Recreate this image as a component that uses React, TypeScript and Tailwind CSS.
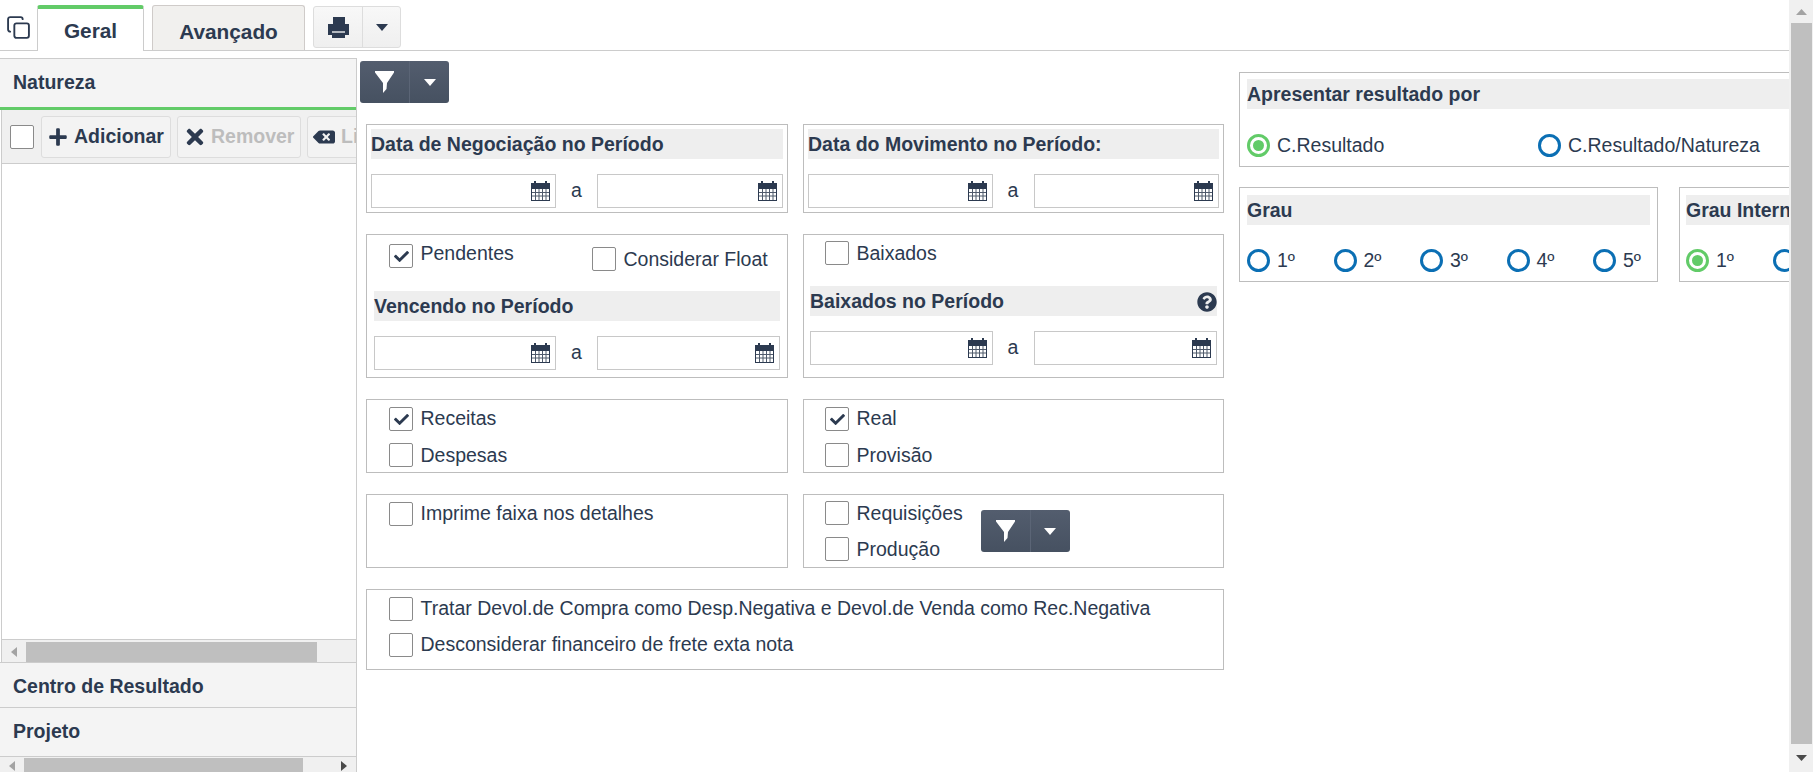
import type { ReactNode } from "react";
import { Copy } from "lucide-react";
import { FaBackspace, FaCheck, FaPlus, FaQuestionCircle, FaTimes } from "react-icons/fa";

const Caret = ({ className }: { className: string }) => (
  <svg width="12" height="7" viewBox="0 0 12 7" className={className}>
    <path d="M0 0h12L6 7z" fill="currentColor" />
  </svg>
);

const PrintIcon = () => (
  <svg width="21" height="21" viewBox="0 0 21 21">
    <path d="M5 0h12v7h4v11h-4v3H4v-3H0V7h5z" fill="#2c3a50" />
    <rect x="4" y="14" width="13" height="2" fill="#b4b9c0" />
    <rect x="1" y="18" width="3" height="3" fill="#f4f4f4" />
  </svg>
);

const FunnelButton = ({ className = "" }: { className?: string }) => (
  <div className={`flex h-[42px] w-[89px] rounded-[3px] bg-gradient-to-b from-[#535d6e] to-[#465161] text-white ${className}`}>
    <div className="flex w-[50px] items-center justify-center border-r border-[#5b6576]">
      <svg width="19" height="22" viewBox="0 0 19 22">
        <path d="M0 0h19v1.5L12 12l-.5 6L8 22V12L0 1.5z" fill="#fff" />
      </svg>
    </div>
    <div className="flex flex-1 items-center justify-center">
      <Caret className="" />
    </div>
  </div>
);

const CalendarIcon = () => (
  <svg width="19" height="20" viewBox="0 0 19 20" className="shrink-0">
    <path d="M0 2h3V0h2v2h9V0h2v2h3v18H0z" fill="#2c3a50" />
    <rect x="1" y="8" width="17" height="11" fill="#ffffff" />
    <path d="M4.5 8v11M8 8v11M11.5 8v11M15 8v11M1 11.5h17M1 15h17" stroke="#4f5a6b" strokeWidth="1" />
  </svg>
);

const DateInput = () => (
  <div className="flex h-[34px] items-center justify-end border border-[#c8c8c8] bg-white pr-[5px]">
    <CalendarIcon />
  </div>
);

const DateRange = () => (
  <div className="mt-[15px] grid grid-cols-[185fr_41px_186fr] items-center">
    <DateInput />
    <span className="-mt-px text-center">a</span>
    <DateInput />
  </div>
);

const Header = ({ children, className = "" }: { children: ReactNode; className?: string }) => (
  <div className={`flex h-[30px] items-center bg-[#eeeeee] pt-px font-bold leading-none ${className}`}>{children}</div>
);

const Box = ({ children, className = "" }: { children: ReactNode; className?: string }) => (
  <div className={`border border-[#bdbdbd] ${className}`}>{children}</div>
);

const Check = ({ label, checked = false, className = "", labelClass = "mt-px" }: { label: string; checked?: boolean; className?: string; labelClass?: string }) => (
  <div className={`flex items-center gap-[7.5px] ${className}`}>
    <div className="flex h-6 w-6 shrink-0 items-center justify-center rounded-[2px] border border-[#8a8a8a] bg-white">
      {checked && <FaCheck size={15} />}
    </div>
    <span className={`whitespace-nowrap leading-none ${labelClass}`}>{label}</span>
  </div>
);

const Radio = ({ label, selected = false, className = "" }: { label: string; selected?: boolean; className?: string }) => (
  <div className={`flex shrink-0 items-center gap-[7px] ${className}`}>
    <div
      className={`flex h-[23px] w-[23px] shrink-0 items-center justify-center rounded-full border-[3px] bg-white ${
        selected ? "border-[#62cb68]" : "border-[#0b6fb4]"
      }`}
    >
      {selected && <div className="h-[11px] w-[11px] rounded-full bg-[#62cb68]" />}
    </div>
    <span className="whitespace-nowrap leading-none">{label}</span>
  </div>
);

const ToolButton = ({ icon, label, disabled = false, className = "" }: { icon: ReactNode; label: string; disabled?: boolean; className?: string }) => (
  <div className={`flex h-[42px] shrink-0 items-center rounded-[3px] border border-[#dddddd] bg-[#f3f3f3] font-bold ${className}`}>
    {icon}
    <span className={disabled ? "text-[#bdbdbd]" : ""}>{label}</span>
  </div>
);

const HScroll = ({ thumbClass, rightArrow = false, className = "" }: { thumbClass: string; rightArrow?: boolean; className?: string }) => (
  <div className={`flex items-start bg-[#f0f0f0] ${className}`}>
    <div className="flex h-full w-[24px] shrink-0 items-center justify-center">
      <svg width="6" height="10" viewBox="0 0 6 10"><path d="M6 0v10L0 5z" fill="#a3a3a3" /></svg>
    </div>
    <div className={`h-full bg-[#bfbfbf] ${thumbClass}`} />
    {rightArrow && (
      <div className="ml-auto flex h-full w-[24px] items-center justify-center">
        <svg width="6" height="10" viewBox="0 0 6 10"><path d="M0 0v10l6-5z" fill="#4a4a4a" /></svg>
      </div>
    )}
  </div>
);

const LeftPanel = () => (
  <aside className="mt-[7px] flex h-[714px] w-[357px] shrink-0 flex-col overflow-hidden border-r border-t border-[#cccccc] font-bold">
    <div className="flex h-[51px] shrink-0 items-center border-b-[3px] border-[#62cb68] bg-[#f4f4f4] pl-[13px]">Natureza</div>
    <div className="ml-px flex h-[552px] shrink-0 flex-col overflow-hidden border-l border-[#cccccc]">
      <div className="flex h-[54px] shrink-0 items-center gap-[6px] border-b border-[#cccccc] bg-[#f0f0f0] pl-[8px]">
        <div className="mr-[1px] h-6 w-6 shrink-0 rounded-[2px] border border-[#8a8a8a] bg-white" />
        <ToolButton icon={<FaPlus size={20} />} label="Adicionar" className="w-[130px] gap-[6px] pl-[6px]" />
        <ToolButton icon={<FaTimes size={24} />} label="Remover" disabled className="w-[124px] gap-[4px] pl-[5px]" />
        <ToolButton icon={<FaBackspace size={22} />} label="Limpar" disabled className="w-[130px] gap-[6px] pl-[5px]" />
      </div>
      <div className="flex-1 bg-white" />
      <HScroll thumbClass="w-[291px]" className="h-[23px] shrink-0 border-t border-[#cccccc] pt-[2px]" />
    </div>
    <div className="flex h-[45px] shrink-0 items-center border-t border-[#cccccc] bg-[#f4f4f4] pl-[13px] pt-[3px]">Centro de Resultado</div>
    <div className="flex h-[49px] shrink-0 items-center border-t border-[#cccccc] bg-[#f4f4f4] pl-[13px]">Projeto</div>
    <HScroll thumbClass="w-[279px]" rightArrow className="h-[17px] shrink-0 border-t border-[#cccccc] pt-px" />
  </aside>
);

const MiddleColumn = () => (
  <section className="w-[882px] shrink-0 pl-[3px] pt-[10px]">
    <FunnelButton />
    <div className="ml-[6px] mt-[21px] grid w-[858px] grid-cols-[422px_421px] gap-x-[15px] gap-y-[21px]">
      <Box className="h-[89px] p-1">
        <Header>Data de Negociação no Período</Header>
        <DateRange />
      </Box>
      <Box className="h-[89px] p-1">
        <Header>Data do Movimento no Período:</Header>
        <DateRange />
      </Box>

      <Box className="h-[144px] px-[7px] pt-[9px]">
        <div className="flex h-[47px] items-start pl-[15px]">
          <Check label="Pendentes" checked labelClass="-mt-[5px]" className="w-[203px]" />
          <Check label="Considerar Float" className="mt-[3px]" />
        </div>
        <Header>Vencendo no Período</Header>
        <DateRange />
      </Box>
      <Box className="h-[144px] px-[6px] pt-[6px]">
        <Check label="Baixados" className="ml-[15px]" />
        <Header className="mt-[21px] justify-between">
          <span>Baixados no Período</span>
          <FaQuestionCircle size={20} />
        </Header>
        <DateRange />
      </Box>

      <Box className="flex h-[74px] flex-col gap-3 pl-[22px] pt-[7px]">
        <Check label="Receitas" checked labelClass="" />
        <Check label="Despesas" />
      </Box>
      <Box className="flex h-[74px] flex-col gap-3 pl-[21px] pt-[7px]">
        <Check label="Real" checked labelClass="" />
        <Check label="Provisão" />
      </Box>

      <Box className="h-[74px] pl-[22px] pt-[7px]">
        <Check label="Imprime faixa nos detalhes" labelClass="" />
      </Box>
      <Box className="flex h-[74px] items-center pl-[21px]">
        <div className="flex flex-col gap-3">
          <Check label="Requisições" />
          <Check label="Produção" />
        </div>
        <FunnelButton className="ml-[18px]" />
      </Box>

      <Box className="col-span-2 flex h-[81px] flex-col gap-3 pl-[22px] pt-[7px]">
        <Check label="Tratar Devol.de Compra como Desp.Negativa e Devol.de Venda como Rec.Negativa" labelClass="" />
        <Check label="Desconsiderar financeiro de frete exta nota" labelClass="" />
      </Box>
    </div>
  </section>
);

const RightColumn = () => (
  <section className="min-w-0 flex-1 overflow-hidden pt-[21px]">
    <Box className="h-[95px] w-[640px] pl-[7px] pt-[6px]">
      <Header className="w-[620px]">Apresentar resultado por</Header>
      <div className="mt-[25px] flex">
        <Radio label="C.Resultado" selected className="w-[291px]" />
        <Radio label="C.Resultado/Natureza" />
      </div>
    </Box>
    <div className="mt-5 flex w-[800px] gap-[21px]">
      <Box className="h-[95px] w-[419px] px-[7px] pt-[7px]">
        <Header>Grau</Header>
        <div className="mt-[24px] flex">
          {["1º", "2º", "3º", "4º", "5º"].map((grau) => (
            <Radio key={grau} label={grau} className="w-[86.5px]" />
          ))}
        </div>
      </Box>
      <Box className="h-[95px] w-[340px] px-[6px] pt-[7px]">
        <Header>Grau Interno</Header>
        <div className="mt-[24px] flex">
          <Radio label="1º" selected className="w-[87px]" />
          <Radio label="2º" />
        </div>
      </Box>
    </div>
  </section>
);

const PageScrollbar = () => (
  <div className="flex h-full w-[24px] shrink-0 flex-col bg-[#f0f0f0] pl-[2px] pr-px">
    <div className="flex h-[23px] shrink-0 items-center justify-center">
      <svg width="11" height="6" viewBox="0 0 11 6"><path d="M0 6h11L5.5 0z" fill="#a3a3a3" /></svg>
    </div>
    <div className="flex-1 bg-[#bfbfbf]" />
    <div className="flex h-[28px] shrink-0 items-center justify-center">
      <svg width="11" height="6" viewBox="0 0 11 6"><path d="M0 0h11L5.5 6z" fill="#4a4a4a" /></svg>
    </div>
  </div>
);

export default function App() {
  return (
    <div className="flex h-[772px] w-[1813px] overflow-hidden bg-white text-[19.5px] text-[#2c3a50] [font-family:'Liberation_Sans',Arial,sans-serif]">
      <div className="flex min-w-0 flex-1 flex-col">
        <div className="flex h-[51px] shrink-0 items-end border-b border-[#cccccc] pl-[6px]">
          <Copy size={25} strokeWidth={1.8} className="mb-[10px] shrink-0" />
          <div className="relative -mb-px ml-[6px] flex h-[46px] w-[107px] items-center justify-center rounded-t-[3px] border-x border-t-4 border-x-[#cccccc] border-t-[#62cb68] bg-white pt-[2px] text-[20.8px] font-bold">
            Geral
          </div>
          <div className="ml-2 flex h-[45px] w-[153px] items-center justify-center rounded-t-[3px] border border-b-0 border-[#cfcbc9] bg-[#f1f0ee] pt-[7px] text-[20.8px] font-bold">
            Avançado
          </div>
          <div className="mb-[2px] ml-2 flex h-[42px] w-[88px] rounded-[3px] border border-[#dddddd] bg-gradient-to-b from-[#f8f8f8] to-[#efefef]">
            <div className="flex w-[49px] items-center justify-center border-r border-[#dddddd]">
              <PrintIcon />
            </div>
            <div className="flex flex-1 items-center justify-center">
              <Caret className="" />
            </div>
          </div>
        </div>
        <div className="flex min-h-0 flex-1">
          <LeftPanel />
          <MiddleColumn />
          <RightColumn />
        </div>
      </div>
      <PageScrollbar />
    </div>
  );
}
